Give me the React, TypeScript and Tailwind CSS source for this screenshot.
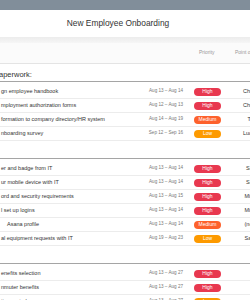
import React from 'react'

type Priority = 'High' | 'Medium' | 'Low'

interface Task {
  name: string
  dates: string
  priority: Priority
  owner: string
  pad?: string
}

interface Section {
  title: string
  tasks: Task[]
}

const badgeColors: Record<Priority, string> = {
  High: 'bg-[#e8384f]',
  Medium: 'bg-[#fd612c]',
  Low: 'bg-[#fd9a00]',
}

// section titles for the 2nd and 3rd groups sit left of the visible area
const sections: Section[] = [
  {
    title: 'Paperwork:',
    tasks: [
      { name: 'gn employee handbook', dates: 'Aug 13 – Aug 14', priority: 'High', owner: 'Chris' },
      { name: 'mployment authorization forms', dates: 'Aug 12 – Aug 13', priority: 'High', owner: 'Chris' },
      { name: 'formation to company directory/HR system', dates: 'Aug 14 – Aug 19', priority: 'Medium', owner: '   Tina' },
      { name: 'nboarding survey', dates: 'Sep 12 – Sep 16', priority: 'Low', owner: 'Lucy' },
    ],
  },
  {
    title: '',
    tasks: [
      { name: 'er and badge from IT', dates: 'Aug 13 – Aug 14', priority: 'High', owner: '  Sam' },
      { name: 'ur mobile device with IT', dates: 'Aug 13 – Aug 14', priority: 'High', owner: '  Sam' },
      { name: 'ord and security requirements', dates: 'Aug 13 – Aug 15', priority: 'High', owner: ' Mike' },
      { name: 'l set up logins', dates: 'Aug 13 – Aug 14', priority: 'High', owner: ' Mike' },
      { name: 'Asana profile', dates: 'Aug 13 – Aug 14', priority: 'Medium', owner: ' (none)', pad: 'pl-[7px]' },
      { name: 'al equipment requests with IT', dates: 'Aug 19 – Aug 23', priority: 'Low', owner: ' Sam' },
    ],
  },
  {
    title: '',
    tasks: [
      { name: 'enefits selection', dates: 'Aug 13 – Aug 27', priority: 'High', owner: '' },
      { name: 'nmuter benefits', dates: 'Aug 13 – Aug 27', priority: 'High', owner: '' },
      { name: 'tirement plan', dates: 'Aug 13 – Aug 27', priority: 'Low', owner: '' },
    ],
  },
]

function TaskRow({ task }: { task: Task }) {
  return (
    <div className="flex items-center h-[14px] border-b border-[#ececec] shrink-0">
      <div className={`flex-1 min-w-0 truncate text-[5.5px] text-[#333] ${task.pad ?? 'pl-[1px]'}`}>{task.name}</div>
      <div className="w-[50px] text-right text-[4.6px] text-[#777] whitespace-nowrap">{task.dates}</div>
      <div className="w-[44px] pl-[11px]">
        <div className={`w-[27px] h-[8px] rounded-full flex items-center justify-center text-[5px] text-white ${badgeColors[task.priority]}`}>
          {task.priority}
        </div>
      </div>
      <div className="w-[23px] pl-[16px] text-[5.5px] text-[#333] whitespace-pre overflow-hidden">{task.owner}</div>
    </div>
  )
}

function SectionBlock({ section }: { section: Section }) {
  return (
    <div className="flex flex-col">
      <div className="h-[18px] flex items-end pb-[1px] border-b border-[#a5a5a5] overflow-hidden">
        <span className="-ml-[6px] text-[7.5px] text-[#333] font-medium whitespace-nowrap">{section.title}</span>
      </div>
      <div className="pt-[3px] flex flex-col">
        {section.tasks.map((t, i) => (
          <TaskRow key={i} task={t} />
        ))}
      </div>
    </div>
  )
}

export default function App() {
  return (
    <div className="w-[250px] h-[300px] overflow-hidden bg-white flex flex-col font-['Liberation_Sans',Arial,sans-serif]">
      <div className="h-[10px] bg-[#818e9a] shrink-0" />
      <div className="h-[27px] bg-white flex items-center justify-center shrink-0">
        <span className="text-[8.4px] text-[#333] mr-[14px]">New Employee Onboarding</span>
      </div>
      <div className="h-[6px] bg-gradient-to-b from-[#ececec] to-[#f6f6f6] shrink-0" />
      <div className="h-[21px] flex items-center border-b border-[#e4e4e4] bg-[#fbfbfb] shrink-0">
        <div className="flex-1" />
        <div className="w-[50px]" />
        <div className="w-[44px] pl-[16px] text-[5px] text-[#999]">Priority</div>
        <div className="w-[23px] pl-[8px] text-[5px] text-[#999] whitespace-nowrap overflow-hidden">Point of contact</div>
      </div>
      {sections.map((s, i) => (
        <SectionBlock key={i} section={s} />
      ))}
    </div>
  )
}
